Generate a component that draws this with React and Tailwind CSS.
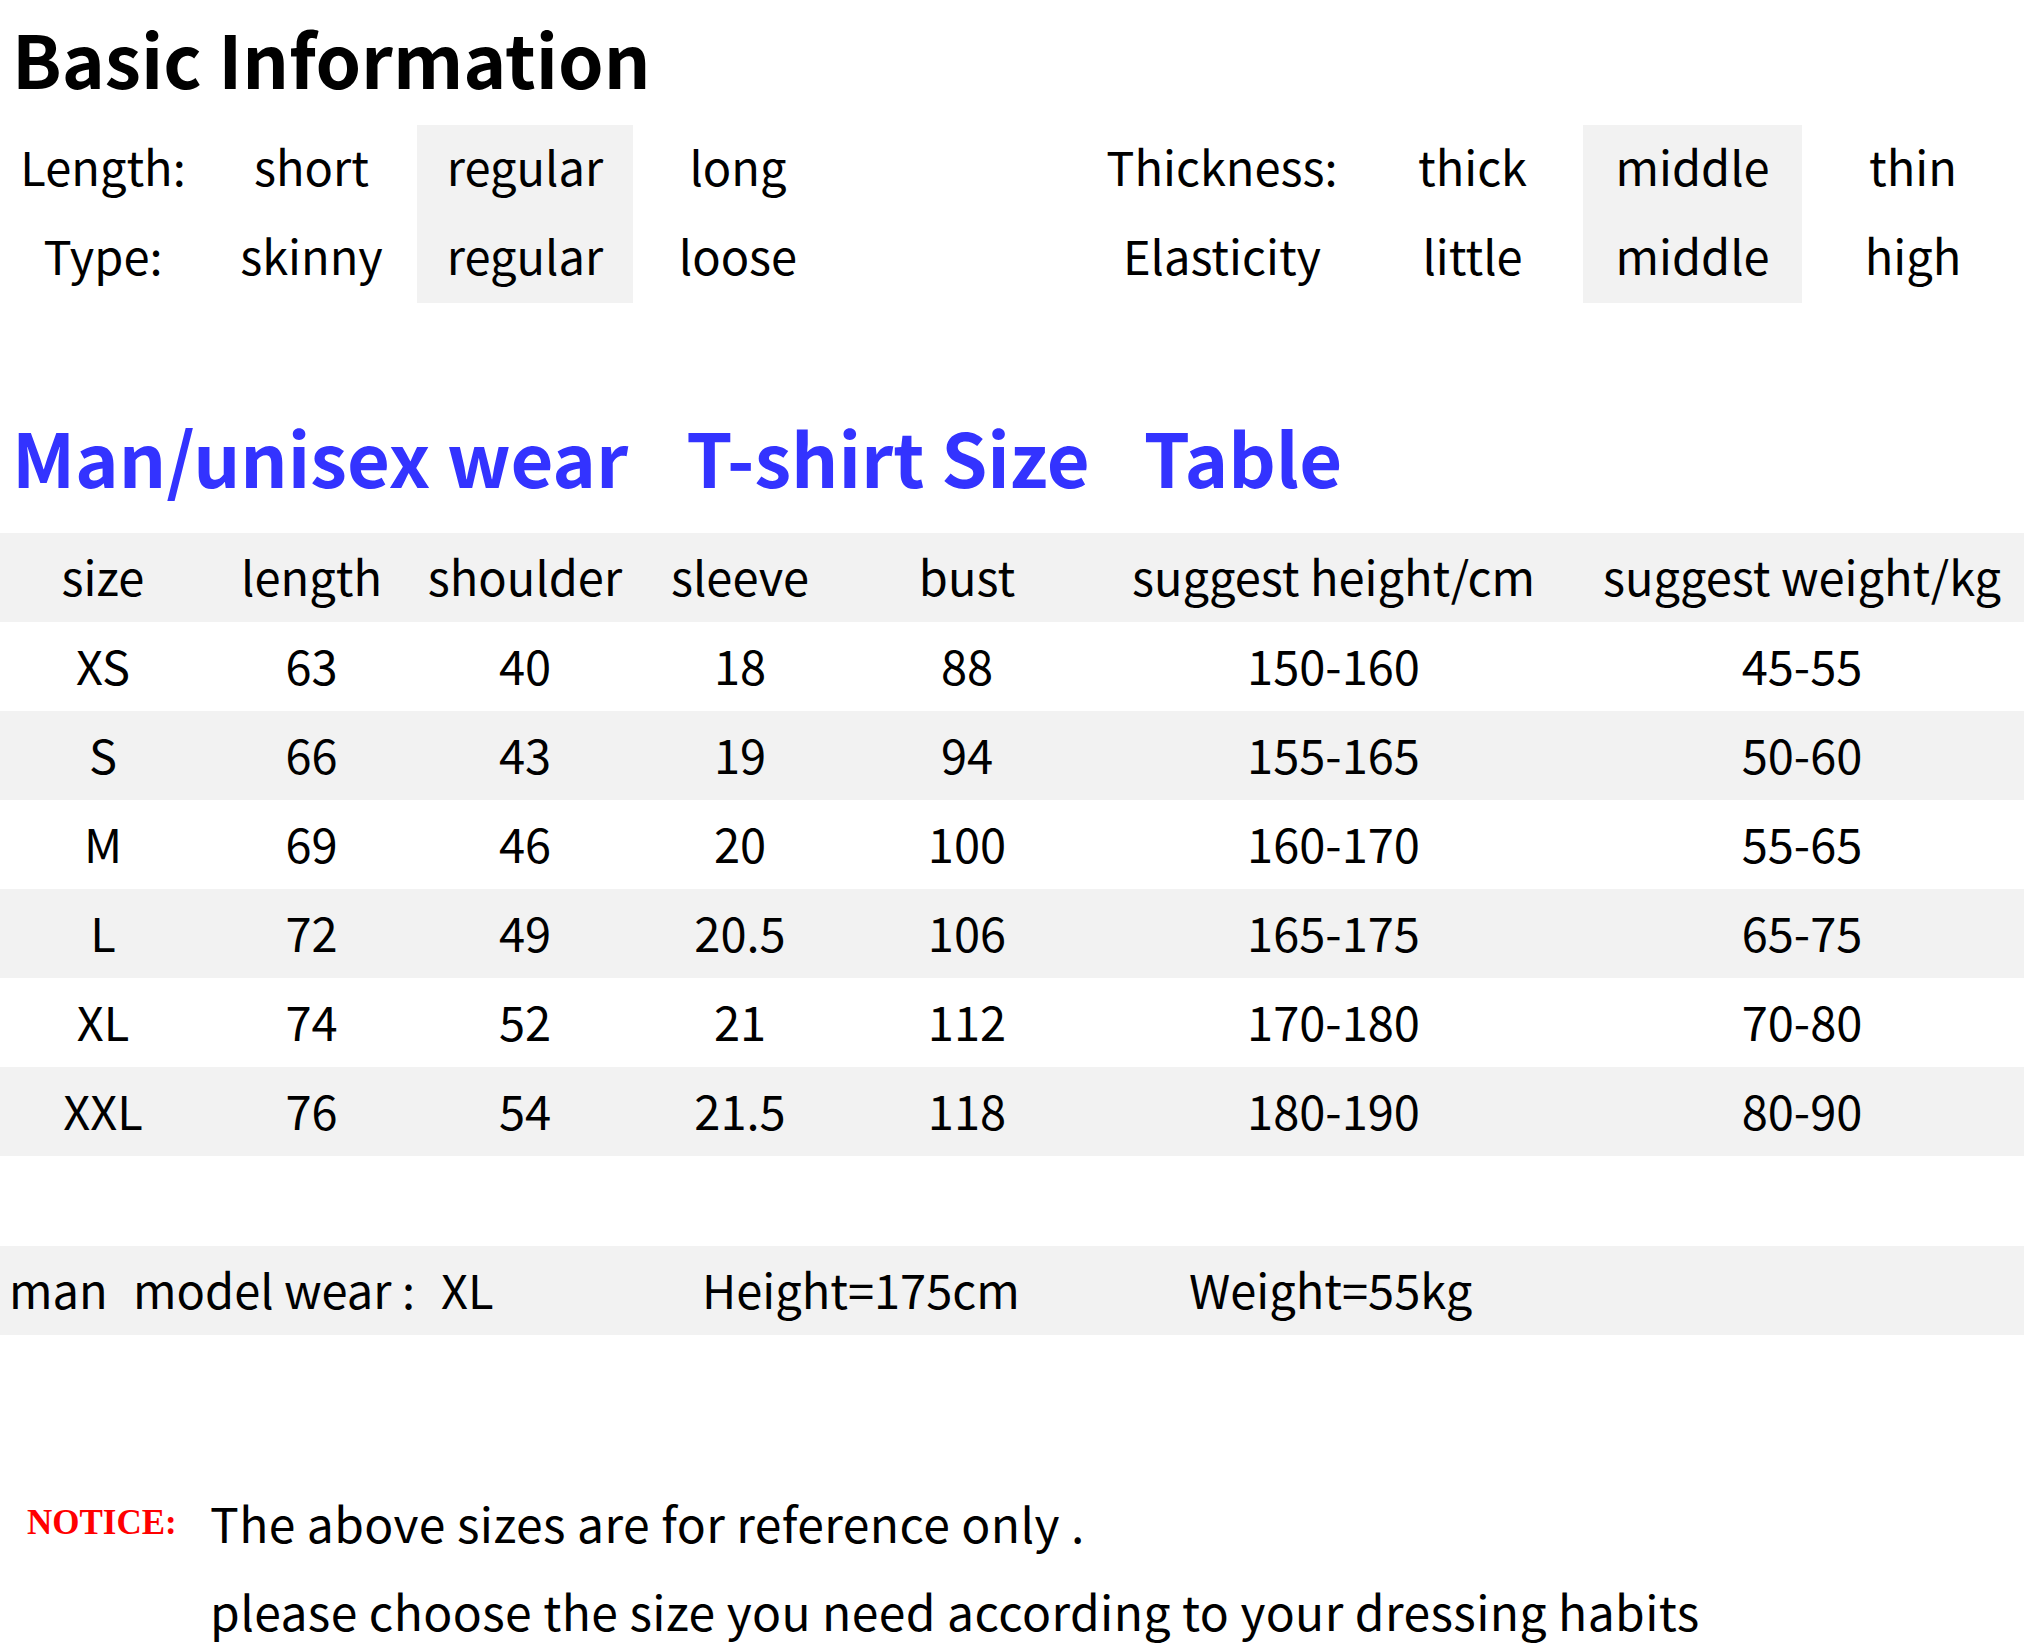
import React from 'react';

const basicRows = [
    ['Length:', 'short', 'regular', 'long', 'Thickness:', 'thick', 'middle', 'thin'],
    ['Type:', 'skinny', 'regular', 'loose', 'Elasticity', 'little', 'middle', 'high'],
];

const header = ['size', 'length', 'shoulder', 'sleeve', 'bust', 'suggest height/cm', 'suggest weight/kg'];

const sizes = [
    ['XS', '63', '40', '18', '88', '150-160', '45-55'],
    ['S', '66', '43', '19', '94', '155-165', '50-60'],
    ['M', '69', '46', '20', '100', '160-170', '55-65'],
    ['L', '72', '49', '20.5', '106', '165-175', '65-75'],
    ['XL', '74', '52', '21', '112', '170-180', '70-80'],
    ['XXL', '76', '54', '21.5', '118', '180-190', '80-90'],
];

function BasicRow({ cells }) {
    return (
        <div className="grid grid-cols-[206px_211px_216px_210px_239px_280px_221px_219px_1fr] h-[89px]">
            {cells.map((c, i) => (
                <React.Fragment key={i}>
                    {i === 4 && <div />}
                    <div className={'flex items-center justify-center pb-[8px] ' + (i === 2 || i === 6 ? 'bg-[#f2f2f2]' : '')}>
                        {c}
                    </div>
                </React.Fragment>
            ))}
        </div>
    );
}

function SizeRow({ cells, grey }) {
    return (
        <div className={'grid grid-cols-[206px_211px_216px_214px_240px_493px_1fr] h-[89px] ' + (grey ? 'bg-[#f2f2f2]' : '')}>
            {cells.map((c, i) => (
                <div key={i} className="flex items-center justify-center pb-[5px]">{c}</div>
            ))}
        </div>
    );
}

export default function App() {
    return (
        <div className="w-[2024px] h-[1651px] overflow-hidden bg-white text-black font-['Noto_Sans_CJK_SC','Noto_Sans',sans-serif]">
            {/* basic info */}
            <div className="h-[125px] flex items-center pl-[12px] pb-[10px]">
                <h1 className="text-[73px] font-bold leading-none">Basic Information</h1>
            </div>
            <div className="text-[47px] leading-none">
                {basicRows.map((r, i) => (
                    <BasicRow key={i} cells={r} />
                ))}
            </div>

            {/* size table */}
            <div className="h-[230px] flex items-end pb-[40px] pl-[12px] text-[74px] font-bold leading-none text-[#3333ff]">
                <span>Man/unisex wear</span>
                <span className="ml-[58px]">T-shirt Size</span>
                <span className="ml-[54px]">Table</span>
            </div>
            <div className="text-[47px] leading-none">
                <SizeRow cells={header} grey />
                {sizes.map((r, i) => (
                    <SizeRow key={i} cells={r} grey={i % 2 === 1} />
                ))}
            </div>

            {/* model */}
            <div className="mt-[90px] h-[89px] bg-[#f2f2f2] flex items-center pl-[9px] pb-[4px] text-[47px] leading-none">
                <span className="w-[124px]">man</span>
                <span className="w-[308px]">model wear :</span>
                <span className="w-[261px]">XL</span>
                <span className="w-[487px]">Height=175cm</span>
                <span>Weight=55kg</span>
            </div>

            {/* notice */}
            <div className="mt-[145px] grid grid-cols-[210px_1fr] text-[48px] tracking-[0.4px] leading-none">
                <div className="h-[88px] flex items-center pl-[27px] pb-[4px] text-[35px] tracking-normal font-bold text-[#ff0000] font-['Liberation_Serif',serif]">
                    NOTICE:
                </div>
                <div className="h-[88px] flex items-center pb-[4px]">The above sizes are for reference only .</div>
                <div />
                <div className="h-[88px] flex items-center pb-[4px]">please choose the size you need according to your dressing habits</div>
            </div>
        </div>
    );
}
